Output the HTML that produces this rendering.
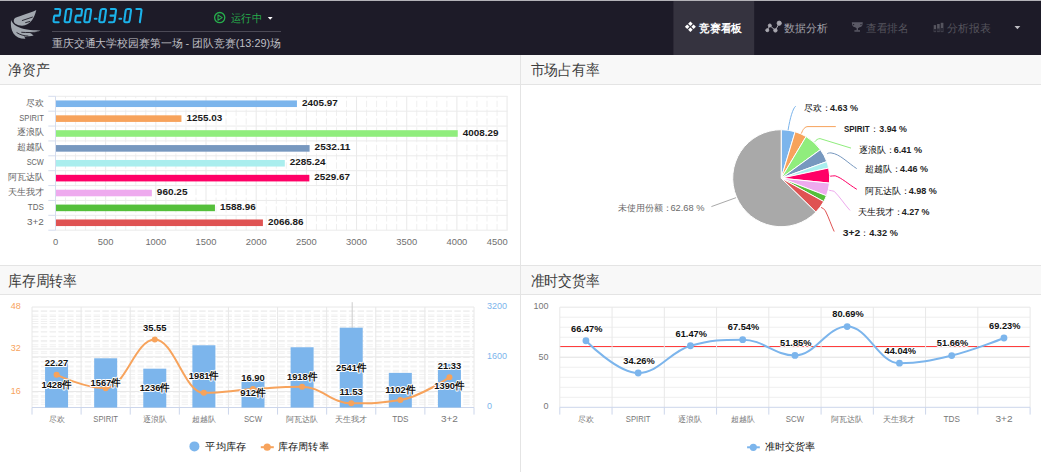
<!DOCTYPE html><html><head><meta charset="utf-8"><style>html,body{margin:0;padding:0;background:#fff;width:1041px;height:472px;overflow:hidden}svg{display:block}</style></head><body>
<svg width="1041" height="472" viewBox="0 0 1041 472">
<rect x="0" y="0" width="1041" height="55" fill="#1d1b28"/>
<rect x="0" y="0" width="1041" height="1" fill="#b4b3b8"/>
<rect x="673.4" y="1" width="80.8" height="54" fill="#35333f"/>
<g fill="#a2a8b0"><path d="M36.3,9.9 C30,13 20,15.5 15.5,17.8 C13.3,19 13.2,22.3 15.3,23.8 C18,25.6 22,26.1 25,25.3 C29,24.2 32,20.8 33.6,17.6 C34.8,15.2 35.8,12.2 36.3,9.9 Z"/><path d="M11,20 C13,25 19,28.3 27,29.6 C32,30.3 37,30.5 40.6,30.4 C37,31.8 34,32.8 30,33.3 C32,34 33,35 33.6,35.5 C30,36.3 27,36.8 24,36.6 C25,37.5 25.2,38.2 25.3,38.8 C20,38.9 16,37 13.5,33.5 C11,30 10.5,25 11,20 Z"/></g>
<g fill="none" stroke="#1d1b26" stroke-width="0.9" stroke-linecap="round"><path d="M22.3,20.5 L32.4,17.1"/><path d="M25.6,22.6 L29.8,21.5"/><path d="M16.9,32.7 C20,34.8 24,35.9 28,36.1"/><path d="M21.7,32.3 C27,32.7 33,32.6 38,32"/></g>
<g stroke="#1bb2ea" stroke-width="2.1" fill="none" stroke-linecap="round" stroke-linejoin="round">
<path d="M55.20,9.05 L58.90,9.05 Q60.50,9.05 60.27,10.65 L59.65,15.10"/>
<path d="M54.82,15.65 L59.02,15.65"/>
<path d="M54.20,16.20 L53.57,20.65 Q53.35,22.25 54.95,22.25 L58.65,22.25"/>
<path d="M65.45,15.10 L66.07,10.65 Q66.30,9.05 67.90,9.05 L70.00,9.05 Q71.60,9.05 71.37,10.65 L70.75,15.10"/>
<path d="M65.30,16.20 L64.67,20.65 Q64.45,22.25 66.05,22.25 L68.15,22.25 Q69.75,22.25 69.97,20.65 L70.60,16.20"/>
<path d="M76.90,9.05 L80.60,9.05 Q82.20,9.05 81.97,10.65 L81.35,15.10"/>
<path d="M76.52,15.65 L80.72,15.65"/>
<path d="M75.90,16.20 L75.27,20.65 Q75.05,22.25 76.65,22.25 L80.35,22.25"/>
<path d="M85.15,15.10 L85.77,10.65 Q86.00,9.05 87.60,9.05 L89.70,9.05 Q91.30,9.05 91.07,10.65 L90.45,15.10"/>
<path d="M85.00,16.20 L84.37,20.65 Q84.15,22.25 85.75,22.25 L87.85,22.25 Q89.45,22.25 89.67,20.65 L90.30,16.20"/>
<path d="M94.83,18.82 L96.53,18.82"/>
<path d="M100.05,15.10 L100.67,10.65 Q100.90,9.05 102.50,9.05 L104.60,9.05 Q106.20,9.05 105.97,10.65 L105.35,15.10"/>
<path d="M99.90,16.20 L99.27,20.65 Q99.05,22.25 100.65,22.25 L102.75,22.25 Q104.35,22.25 104.57,20.65 L105.20,16.20"/>
<path d="M110.90,9.05 L114.60,9.05 Q116.20,9.05 115.97,10.65 L115.35,15.10"/>
<path d="M110.52,15.65 L114.72,15.65"/>
<path d="M115.20,16.20 L114.57,20.65 Q114.35,22.25 112.75,22.25 L109.05,22.25"/>
<path d="M119.43,18.82 L121.13,18.82"/>
<path d="M125.05,15.10 L125.67,10.65 Q125.90,9.05 127.50,9.05 L129.60,9.05 Q131.20,9.05 130.97,10.65 L130.35,15.10"/>
<path d="M124.90,16.20 L124.27,20.65 Q124.05,22.25 125.65,22.25 L127.75,22.25 Q129.35,22.25 129.57,20.65 L130.20,16.20"/>
<path d="M136.40,9.05 L140.10,9.05 Q141.70,9.05 141.47,10.65 L140.85,15.10"/>
<path d="M140.70,16.20 L139.85,22.25"/>
</g>
<circle cx="219.7" cy="17.6" r="5.1" fill="none" stroke="#27ad4c" stroke-width="1.3"/>
<path d="M218,15 L218,20.2 L222.2,17.6 Z" fill="none" stroke="#27ad4c" stroke-width="1.1" stroke-linejoin="round"/>
<text x="231.00" y="22.30" font-size="11" fill="#27ad4c" text-anchor="start" font-weight="normal" font-family='"Liberation Sans", sans-serif' textLength="31" lengthAdjust="spacingAndGlyphs">运行中</text>
<path d="M267.8,17 L272.6,17 L270.2,19.8 Z" fill="#ffffff"/>
<rect x="52" y="31" width="229" height="1" fill="#4c4a56"/>
<text x="52.00" y="47.00" font-size="11" fill="#bfbfc4" text-anchor="start" font-weight="normal" font-family='"Liberation Sans", sans-serif' textLength="229" lengthAdjust="spacingAndGlyphs">重庆交通大学校园赛第一场 - 团队竞赛(13:29)场</text>
<g fill="#ffffff"><path d="M690.4,21.5 L692.7,23.8 L690.4,26.1 L688.1,23.8 Z"/><path d="M690.4,27.5 L692.7,29.8 L690.4,32.1 L688.1,29.8 Z"/><path d="M687.2,24.5 L689.5,26.8 L687.2,29.1 L684.9,26.8 Z"/><path d="M693.6,24.5 L695.9,26.8 L693.6,29.1 L691.3,26.8 Z"/></g>
<text x="699.20" y="32.00" font-size="11" fill="#ffffff" text-anchor="start" font-weight="bold" font-family='"Liberation Sans", sans-serif' textLength="43" lengthAdjust="spacingAndGlyphs">竞赛看板</text>
<g stroke="#a9a8b0" stroke-width="1" fill="#a9a8b0"><polyline points="767.3,30.2 769.8,25.5 775.4,30.4 779.2,23.2" fill="none"/><circle cx="767.3" cy="30.2" r="1.5"/><circle cx="769.8" cy="25.5" r="1.5"/><circle cx="775.4" cy="30.4" r="1.7"/><circle cx="779.2" cy="23.2" r="2.1"/></g>
<text x="784.00" y="32.00" font-size="11" fill="#a4a3ab" text-anchor="start" font-weight="normal" font-family='"Liberation Sans", sans-serif' textLength="43.5" lengthAdjust="spacingAndGlyphs">数据分析</text>
<g fill="#5a5965"><path d="M851.8,22.3 L862.8,22.3 L862.5,24.5 C862.2,26.5 861,27 859.5,27.2 C858.8,27.8 858,28.3 857.3,28.3 C856.6,28.3 855.8,27.8 855.1,27.2 C853.6,27 852.4,26.5 852.1,24.5 Z"/><rect x="856.6" y="28" width="1.4" height="2.5"/><rect x="854.4" y="30.2" width="5.6" height="1.5"/></g><circle cx="853.6" cy="24.6" r="0.7" fill="#1d1b26"/><circle cx="861" cy="24.6" r="0.7" fill="#1d1b26"/>
<text x="866.00" y="32.00" font-size="11" fill="#55545d" text-anchor="start" font-weight="normal" font-family='"Liberation Sans", sans-serif' textLength="42.5" lengthAdjust="spacingAndGlyphs">查看排名</text>
<g fill="#55545e"><rect x="933.7" y="25.1" width="2.4" height="7"/><rect x="937.1" y="24" width="2.6" height="8.1"/><rect x="940.7" y="22.8" width="2.7" height="9.3"/></g><g fill="#2a2936"><rect x="933.7" y="29" width="2.4" height="2.5"/><rect x="937.1" y="28.5" width="2.6" height="3"/><rect x="940.7" y="28" width="2.7" height="3.5"/></g>
<text x="947.00" y="32.00" font-size="11" fill="#55545d" text-anchor="start" font-weight="normal" font-family='"Liberation Sans", sans-serif' textLength="43.5" lengthAdjust="spacingAndGlyphs">分析报表</text>
<path d="M1014.5,26 L1020.3,26 L1017.4,29.2 Z" fill="#bdbdc2"/>
<rect x="0" y="55" width="1041" height="29" fill="#f8f8f8"/>
<rect x="0" y="84" width="1041" height="1" fill="#e4e4e4"/>
<rect x="0" y="265" width="1041" height="1" fill="#e4e4e4"/>
<rect x="0" y="266" width="1041" height="28" fill="#f8f8f8"/>
<rect x="0" y="294" width="1041" height="1" fill="#e4e4e4"/>
<rect x="520" y="55" width="1" height="417" fill="#e4e4e4"/>
<text x="8.00" y="75.00" font-size="14.5" fill="#3d3d3d" text-anchor="start" font-weight="normal" font-family='"Liberation Sans", sans-serif' textLength="41.5" lengthAdjust="spacingAndGlyphs">净资产</text>
<text x="530.50" y="75.00" font-size="14.5" fill="#3d3d3d" text-anchor="start" font-weight="normal" font-family='"Liberation Sans", sans-serif' textLength="69" lengthAdjust="spacingAndGlyphs">市场占有率</text>
<text x="8.00" y="285.50" font-size="14.5" fill="#3d3d3d" text-anchor="start" font-weight="normal" font-family='"Liberation Sans", sans-serif' textLength="69" lengthAdjust="spacingAndGlyphs">库存周转率</text>
<text x="530.50" y="285.50" font-size="14.5" fill="#3d3d3d" text-anchor="start" font-weight="normal" font-family='"Liberation Sans", sans-serif' textLength="69" lengthAdjust="spacingAndGlyphs">准时交货率</text>
<line x1="65.53" y1="230.3" x2="65.53" y2="96.3" stroke="#efefef" stroke-width="1" stroke-dasharray="6.4,2.4"/>
<line x1="75.57" y1="230.3" x2="75.57" y2="96.3" stroke="#efefef" stroke-width="1" stroke-dasharray="6.4,2.4"/>
<line x1="85.60" y1="230.3" x2="85.60" y2="96.3" stroke="#efefef" stroke-width="1" stroke-dasharray="6.4,2.4"/>
<line x1="95.64" y1="230.3" x2="95.64" y2="96.3" stroke="#efefef" stroke-width="1" stroke-dasharray="6.4,2.4"/>
<line x1="115.71" y1="230.3" x2="115.71" y2="96.3" stroke="#efefef" stroke-width="1" stroke-dasharray="6.4,2.4"/>
<line x1="125.74" y1="230.3" x2="125.74" y2="96.3" stroke="#efefef" stroke-width="1" stroke-dasharray="6.4,2.4"/>
<line x1="135.78" y1="230.3" x2="135.78" y2="96.3" stroke="#efefef" stroke-width="1" stroke-dasharray="6.4,2.4"/>
<line x1="145.81" y1="230.3" x2="145.81" y2="96.3" stroke="#efefef" stroke-width="1" stroke-dasharray="6.4,2.4"/>
<line x1="165.88" y1="230.3" x2="165.88" y2="96.3" stroke="#efefef" stroke-width="1" stroke-dasharray="6.4,2.4"/>
<line x1="175.92" y1="230.3" x2="175.92" y2="96.3" stroke="#efefef" stroke-width="1" stroke-dasharray="6.4,2.4"/>
<line x1="185.95" y1="230.3" x2="185.95" y2="96.3" stroke="#efefef" stroke-width="1" stroke-dasharray="6.4,2.4"/>
<line x1="195.99" y1="230.3" x2="195.99" y2="96.3" stroke="#efefef" stroke-width="1" stroke-dasharray="6.4,2.4"/>
<line x1="216.06" y1="230.3" x2="216.06" y2="96.3" stroke="#efefef" stroke-width="1" stroke-dasharray="6.4,2.4"/>
<line x1="226.09" y1="230.3" x2="226.09" y2="96.3" stroke="#efefef" stroke-width="1" stroke-dasharray="6.4,2.4"/>
<line x1="236.13" y1="230.3" x2="236.13" y2="96.3" stroke="#efefef" stroke-width="1" stroke-dasharray="6.4,2.4"/>
<line x1="246.16" y1="230.3" x2="246.16" y2="96.3" stroke="#efefef" stroke-width="1" stroke-dasharray="6.4,2.4"/>
<line x1="266.24" y1="230.3" x2="266.24" y2="96.3" stroke="#efefef" stroke-width="1" stroke-dasharray="6.4,2.4"/>
<line x1="276.27" y1="230.3" x2="276.27" y2="96.3" stroke="#efefef" stroke-width="1" stroke-dasharray="6.4,2.4"/>
<line x1="286.30" y1="230.3" x2="286.30" y2="96.3" stroke="#efefef" stroke-width="1" stroke-dasharray="6.4,2.4"/>
<line x1="296.34" y1="230.3" x2="296.34" y2="96.3" stroke="#efefef" stroke-width="1" stroke-dasharray="6.4,2.4"/>
<line x1="316.41" y1="230.3" x2="316.41" y2="96.3" stroke="#efefef" stroke-width="1" stroke-dasharray="6.4,2.4"/>
<line x1="326.44" y1="230.3" x2="326.44" y2="96.3" stroke="#efefef" stroke-width="1" stroke-dasharray="6.4,2.4"/>
<line x1="336.48" y1="230.3" x2="336.48" y2="96.3" stroke="#efefef" stroke-width="1" stroke-dasharray="6.4,2.4"/>
<line x1="346.51" y1="230.3" x2="346.51" y2="96.3" stroke="#efefef" stroke-width="1" stroke-dasharray="6.4,2.4"/>
<line x1="366.58" y1="230.3" x2="366.58" y2="96.3" stroke="#efefef" stroke-width="1" stroke-dasharray="6.4,2.4"/>
<line x1="376.62" y1="230.3" x2="376.62" y2="96.3" stroke="#efefef" stroke-width="1" stroke-dasharray="6.4,2.4"/>
<line x1="386.65" y1="230.3" x2="386.65" y2="96.3" stroke="#efefef" stroke-width="1" stroke-dasharray="6.4,2.4"/>
<line x1="396.69" y1="230.3" x2="396.69" y2="96.3" stroke="#efefef" stroke-width="1" stroke-dasharray="6.4,2.4"/>
<line x1="416.76" y1="230.3" x2="416.76" y2="96.3" stroke="#efefef" stroke-width="1" stroke-dasharray="6.4,2.4"/>
<line x1="426.79" y1="230.3" x2="426.79" y2="96.3" stroke="#efefef" stroke-width="1" stroke-dasharray="6.4,2.4"/>
<line x1="436.83" y1="230.3" x2="436.83" y2="96.3" stroke="#efefef" stroke-width="1" stroke-dasharray="6.4,2.4"/>
<line x1="446.86" y1="230.3" x2="446.86" y2="96.3" stroke="#efefef" stroke-width="1" stroke-dasharray="6.4,2.4"/>
<line x1="466.94" y1="230.3" x2="466.94" y2="96.3" stroke="#efefef" stroke-width="1" stroke-dasharray="6.4,2.4"/>
<line x1="476.97" y1="230.3" x2="476.97" y2="96.3" stroke="#efefef" stroke-width="1" stroke-dasharray="6.4,2.4"/>
<line x1="487.00" y1="230.3" x2="487.00" y2="96.3" stroke="#efefef" stroke-width="1" stroke-dasharray="6.4,2.4"/>
<line x1="497.04" y1="230.3" x2="497.04" y2="96.3" stroke="#efefef" stroke-width="1" stroke-dasharray="6.4,2.4"/>
<line x1="105.67" y1="96.3" x2="105.67" y2="230.3" stroke="#e9e9e9" stroke-width="1"/>
<line x1="155.85" y1="96.3" x2="155.85" y2="230.3" stroke="#e9e9e9" stroke-width="1"/>
<line x1="206.03" y1="96.3" x2="206.03" y2="230.3" stroke="#e9e9e9" stroke-width="1"/>
<line x1="256.20" y1="96.3" x2="256.20" y2="230.3" stroke="#e9e9e9" stroke-width="1"/>
<line x1="306.38" y1="96.3" x2="306.38" y2="230.3" stroke="#e9e9e9" stroke-width="1"/>
<line x1="356.55" y1="96.3" x2="356.55" y2="230.3" stroke="#e9e9e9" stroke-width="1"/>
<line x1="406.72" y1="96.3" x2="406.72" y2="230.3" stroke="#e9e9e9" stroke-width="1"/>
<line x1="456.90" y1="96.3" x2="456.90" y2="230.3" stroke="#e9e9e9" stroke-width="1"/>
<line x1="507.07" y1="96.3" x2="507.07" y2="230.3" stroke="#e9e9e9" stroke-width="1"/>
<line x1="55.5" y1="96.30" x2="507.6" y2="96.30" stroke="#ebebeb" stroke-width="1"/>
<line x1="55.5" y1="111.18" x2="507.6" y2="111.18" stroke="#ebebeb" stroke-width="1"/>
<line x1="55.5" y1="126.06" x2="507.6" y2="126.06" stroke="#ebebeb" stroke-width="1"/>
<line x1="55.5" y1="140.93" x2="507.6" y2="140.93" stroke="#ebebeb" stroke-width="1"/>
<line x1="55.5" y1="155.81" x2="507.6" y2="155.81" stroke="#ebebeb" stroke-width="1"/>
<line x1="55.5" y1="170.69" x2="507.6" y2="170.69" stroke="#ebebeb" stroke-width="1"/>
<line x1="55.5" y1="185.57" x2="507.6" y2="185.57" stroke="#ebebeb" stroke-width="1"/>
<line x1="55.5" y1="200.44" x2="507.6" y2="200.44" stroke="#ebebeb" stroke-width="1"/>
<line x1="55.5" y1="215.32" x2="507.6" y2="215.32" stroke="#ebebeb" stroke-width="1"/>
<line x1="55.5" y1="230.20" x2="507.6" y2="230.20" stroke="#ebebeb" stroke-width="1"/>
<line x1="55.5" y1="96.3" x2="55.5" y2="230.3" stroke="#d5ddee" stroke-width="1"/>
<line x1="48.3" y1="96.30" x2="55.5" y2="96.30" stroke="#d5ddee" stroke-width="1"/>
<line x1="48.3" y1="111.18" x2="55.5" y2="111.18" stroke="#d5ddee" stroke-width="1"/>
<line x1="48.3" y1="126.06" x2="55.5" y2="126.06" stroke="#d5ddee" stroke-width="1"/>
<line x1="48.3" y1="140.93" x2="55.5" y2="140.93" stroke="#d5ddee" stroke-width="1"/>
<line x1="48.3" y1="155.81" x2="55.5" y2="155.81" stroke="#d5ddee" stroke-width="1"/>
<line x1="48.3" y1="170.69" x2="55.5" y2="170.69" stroke="#d5ddee" stroke-width="1"/>
<line x1="48.3" y1="185.57" x2="55.5" y2="185.57" stroke="#d5ddee" stroke-width="1"/>
<line x1="48.3" y1="200.44" x2="55.5" y2="200.44" stroke="#d5ddee" stroke-width="1"/>
<line x1="48.3" y1="215.32" x2="55.5" y2="215.32" stroke="#d5ddee" stroke-width="1"/>
<line x1="48.3" y1="230.20" x2="55.5" y2="230.20" stroke="#d5ddee" stroke-width="1"/>
<rect x="56.0" y="100.44" width="240.94" height="6.6" fill="#7cb5ec"/>
<text x="301.94" y="105.84" font-size="9.8" fill="#1a1a1a" text-anchor="start" font-weight="bold" font-family='"Liberation Sans", sans-serif' textLength="35.7" lengthAdjust="spacingAndGlyphs">2405.97</text>
<text x="43.80" y="105.64" font-size="8.6" fill="#666666" text-anchor="end" font-weight="normal" font-family='"Liberation Sans", sans-serif'>尽欢</text>
<rect x="56.0" y="115.32" width="125.44" height="6.6" fill="#f7a35c"/>
<text x="186.44" y="120.72" font-size="9.8" fill="#1a1a1a" text-anchor="start" font-weight="bold" font-family='"Liberation Sans", sans-serif' textLength="35.7" lengthAdjust="spacingAndGlyphs">1255.03</text>
<text x="19.30" y="120.72" font-size="9.5" fill="#666666" text-anchor="start" font-weight="normal" font-family='"Liberation Sans", sans-serif' textLength="24.5" lengthAdjust="spacingAndGlyphs">SPIRIT</text>
<rect x="56.0" y="130.19" width="401.73" height="6.6" fill="#90ed7d"/>
<text x="462.73" y="135.59" font-size="9.8" fill="#1a1a1a" text-anchor="start" font-weight="bold" font-family='"Liberation Sans", sans-serif' textLength="35.7" lengthAdjust="spacingAndGlyphs">4008.29</text>
<text x="43.80" y="135.39" font-size="8.6" fill="#666666" text-anchor="end" font-weight="normal" font-family='"Liberation Sans", sans-serif'>逐浪队</text>
<rect x="56.0" y="145.07" width="253.60" height="6.6" fill="#7798bf"/>
<text x="314.60" y="150.47" font-size="9.8" fill="#1a1a1a" text-anchor="start" font-weight="bold" font-family='"Liberation Sans", sans-serif' textLength="35.7" lengthAdjust="spacingAndGlyphs">2532.11</text>
<text x="43.80" y="150.27" font-size="8.6" fill="#666666" text-anchor="end" font-weight="normal" font-family='"Liberation Sans", sans-serif'>超越队</text>
<rect x="56.0" y="159.95" width="228.82" height="6.6" fill="#aaeeee"/>
<text x="289.82" y="165.35" font-size="9.8" fill="#1a1a1a" text-anchor="start" font-weight="bold" font-family='"Liberation Sans", sans-serif' textLength="35.7" lengthAdjust="spacingAndGlyphs">2285.24</text>
<text x="26.70" y="165.35" font-size="9.5" fill="#666666" text-anchor="start" font-weight="normal" font-family='"Liberation Sans", sans-serif' textLength="17.1" lengthAdjust="spacingAndGlyphs">SCW</text>
<rect x="56.0" y="174.83" width="253.35" height="6.6" fill="#ff0066"/>
<text x="314.35" y="180.23" font-size="9.8" fill="#1a1a1a" text-anchor="start" font-weight="bold" font-family='"Liberation Sans", sans-serif' textLength="35.7" lengthAdjust="spacingAndGlyphs">2529.67</text>
<text x="43.80" y="180.03" font-size="8.6" fill="#666666" text-anchor="end" font-weight="normal" font-family='"Liberation Sans", sans-serif'>阿瓦达队</text>
<rect x="56.0" y="189.71" width="95.86" height="6.6" fill="#eeaaee"/>
<text x="156.86" y="195.11" font-size="9.8" fill="#1a1a1a" text-anchor="start" font-weight="bold" font-family='"Liberation Sans", sans-serif' textLength="30.6" lengthAdjust="spacingAndGlyphs">960.25</text>
<text x="43.80" y="194.91" font-size="8.6" fill="#666666" text-anchor="end" font-weight="normal" font-family='"Liberation Sans", sans-serif'>天生我才</text>
<rect x="56.0" y="204.58" width="158.95" height="6.6" fill="#55bf3b"/>
<text x="219.95" y="209.98" font-size="9.8" fill="#1a1a1a" text-anchor="start" font-weight="bold" font-family='"Liberation Sans", sans-serif' textLength="35.7" lengthAdjust="spacingAndGlyphs">1588.96</text>
<text x="27.80" y="209.98" font-size="9.5" fill="#666666" text-anchor="start" font-weight="normal" font-family='"Liberation Sans", sans-serif' textLength="16" lengthAdjust="spacingAndGlyphs">TDS</text>
<rect x="56.0" y="219.46" width="206.91" height="6.6" fill="#df5353"/>
<text x="267.91" y="224.86" font-size="9.8" fill="#1a1a1a" text-anchor="start" font-weight="bold" font-family='"Liberation Sans", sans-serif' textLength="35.7" lengthAdjust="spacingAndGlyphs">2066.86</text>
<text x="27.00" y="224.86" font-size="9.5" fill="#666666" text-anchor="start" font-weight="normal" font-family='"Liberation Sans", sans-serif' textLength="16.8" lengthAdjust="spacingAndGlyphs">3+2</text>
<text x="55.50" y="244.60" font-size="9.4" fill="#6f6f6f" text-anchor="middle" font-weight="normal" font-family='"Liberation Sans", sans-serif'>0</text>
<text x="105.67" y="244.60" font-size="9.4" fill="#6f6f6f" text-anchor="middle" font-weight="normal" font-family='"Liberation Sans", sans-serif'>500</text>
<text x="155.85" y="244.60" font-size="9.4" fill="#6f6f6f" text-anchor="middle" font-weight="normal" font-family='"Liberation Sans", sans-serif'>1000</text>
<text x="206.03" y="244.60" font-size="9.4" fill="#6f6f6f" text-anchor="middle" font-weight="normal" font-family='"Liberation Sans", sans-serif'>1500</text>
<text x="256.20" y="244.60" font-size="9.4" fill="#6f6f6f" text-anchor="middle" font-weight="normal" font-family='"Liberation Sans", sans-serif'>2000</text>
<text x="306.38" y="244.60" font-size="9.4" fill="#6f6f6f" text-anchor="middle" font-weight="normal" font-family='"Liberation Sans", sans-serif'>2500</text>
<text x="356.55" y="244.60" font-size="9.4" fill="#6f6f6f" text-anchor="middle" font-weight="normal" font-family='"Liberation Sans", sans-serif'>3000</text>
<text x="406.72" y="244.60" font-size="9.4" fill="#6f6f6f" text-anchor="middle" font-weight="normal" font-family='"Liberation Sans", sans-serif'>3500</text>
<text x="456.90" y="244.60" font-size="9.4" fill="#6f6f6f" text-anchor="middle" font-weight="normal" font-family='"Liberation Sans", sans-serif'>4000</text>
<text x="507.60" y="244.60" font-size="9.4" fill="#6f6f6f" text-anchor="end" font-weight="normal" font-family='"Liberation Sans", sans-serif'>4500</text>
<g stroke="#ffffff" stroke-width="1" stroke-linejoin="round">
<path d="M781.2,178.2 L781.20,129.70 A48.5,48.5 0 0 1 795.11,131.74 Z" fill="#7cb5ec"/>
<path d="M781.2,178.2 L795.11,131.74 A48.5,48.5 0 0 1 806.07,136.56 Z" fill="#f7a35c"/>
<path d="M781.2,178.2 L806.07,136.56 A48.5,48.5 0 0 1 820.40,149.64 Z" fill="#90ed7d"/>
<path d="M781.2,178.2 L820.40,149.64 A48.5,48.5 0 0 1 826.77,161.60 Z" fill="#7798bf"/>
<path d="M781.2,178.2 L826.77,161.60 A48.5,48.5 0 0 1 828.62,168.04 Z" fill="#aaeeee"/>
<path d="M781.2,178.2 L828.62,168.04 A48.5,48.5 0 0 1 829.45,183.13 Z" fill="#ff0066"/>
<path d="M781.2,178.2 L829.45,183.13 A48.5,48.5 0 0 1 826.42,195.74 Z" fill="#eeaaee"/>
<path d="M781.2,178.2 L826.42,195.74 A48.5,48.5 0 0 1 823.70,201.57 Z" fill="#55bf3b"/>
<path d="M781.2,178.2 L823.70,201.57 A48.5,48.5 0 0 1 815.88,212.10 Z" fill="#df5353"/>
<path d="M781.2,178.2 L815.88,212.10 A48.5,48.5 0 1 1 781.20,129.70 Z" fill="#a9a9a9"/>
</g>
<path d="M788.1,130 C790,118 793,108 795.7,106.2" fill="none" stroke="#7cb5ec" stroke-width="1"/>
<path d="M801.4,133.5 C803,129 805,126.6 808,126.6 L835.8,126.6" fill="none" stroke="#f7a35c" stroke-width="1"/>
<path d="M814.8,141.8 C816,140 818,138.6 820,138.6 L851,148.1" fill="none" stroke="#90ed7d" stroke-width="1"/>
<path d="M827.2,153.8 C828,153 829,152.9 831,152.9 C840,154 848,163 856.7,168.6" fill="none" stroke="#7798bf" stroke-width="1"/>
<path d="M830.2,176.2 C832,176 833.5,175.8 835.2,175.8 C842,178 848,184 856.8,189.3" fill="none" stroke="#ff0066" stroke-width="1"/>
<path d="M829.2,190.3 C831,190.5 832.5,191 834.2,191.3 C840,197 845,205 850,210.4" fill="none" stroke="#eeaaee" stroke-width="1"/>
<path d="M821.1,207.4 C822.5,208 824,209 825.2,210.4 C829,218 831.5,226 834.2,231.5" fill="none" stroke="#df5353" stroke-width="1"/>
<path d="M736,197.7 L711.4,206.6" fill="none" stroke="#a9a9a9" stroke-width="1"/>
<text x="804.00" y="110.80" font-size="8.6" fill="#111111" text-anchor="start" font-weight="normal" font-family='"Liberation Serif", serif'>尽欢：</text>
<text x="829.90" y="110.80" font-size="9.6" fill="#1e1e1e" text-anchor="start" font-weight="bold" font-family='"Liberation Sans", sans-serif' textLength="28.2" lengthAdjust="spacingAndGlyphs">4.63 %</text>
<text x="843.90" y="131.90" font-size="9.8" fill="#1e1e1e" text-anchor="start" font-weight="bold" font-family='"Liberation Sans", sans-serif' textLength="25.6" lengthAdjust="spacingAndGlyphs">SPIRIT</text>
<text x="869.50" y="131.90" font-size="9" fill="#1e1e1e" text-anchor="start" font-weight="normal" font-family='"Liberation Serif", serif'>：</text>
<text x="879.30" y="131.90" font-size="9.6" fill="#1e1e1e" text-anchor="start" font-weight="bold" font-family='"Liberation Sans", sans-serif' textLength="27.5" lengthAdjust="spacingAndGlyphs">3.94 %</text>
<text x="859.10" y="152.80" font-size="8.6" fill="#111111" text-anchor="start" font-weight="normal" font-family='"Liberation Serif", serif'>逐浪队：</text>
<text x="893.70" y="152.80" font-size="9.6" fill="#1e1e1e" text-anchor="start" font-weight="bold" font-family='"Liberation Sans", sans-serif' textLength="28.3" lengthAdjust="spacingAndGlyphs">6.41 %</text>
<text x="864.90" y="172.30" font-size="8.6" fill="#111111" text-anchor="start" font-weight="normal" font-family='"Liberation Serif", serif'>超越队：</text>
<text x="900.00" y="172.30" font-size="9.6" fill="#1e1e1e" text-anchor="start" font-weight="bold" font-family='"Liberation Sans", sans-serif' textLength="28" lengthAdjust="spacingAndGlyphs">4.46 %</text>
<text x="864.80" y="194.20" font-size="8.6" fill="#111111" text-anchor="start" font-weight="normal" font-family='"Liberation Serif", serif'>阿瓦达队：</text>
<text x="908.70" y="194.20" font-size="9.6" fill="#1e1e1e" text-anchor="start" font-weight="bold" font-family='"Liberation Sans", sans-serif' textLength="28.2" lengthAdjust="spacingAndGlyphs">4.98 %</text>
<text x="858.40" y="215.00" font-size="8.6" fill="#111111" text-anchor="start" font-weight="normal" font-family='"Liberation Serif", serif'>天生我才：</text>
<text x="901.70" y="215.00" font-size="9.6" fill="#1e1e1e" text-anchor="start" font-weight="bold" font-family='"Liberation Sans", sans-serif' textLength="27.9" lengthAdjust="spacingAndGlyphs">4.27 %</text>
<text x="842.80" y="235.60" font-size="9.8" fill="#1e1e1e" text-anchor="start" font-weight="bold" font-family='"Liberation Sans", sans-serif' textLength="17.5" lengthAdjust="spacingAndGlyphs">3+2</text>
<text x="860.30" y="235.60" font-size="9" fill="#1e1e1e" text-anchor="start" font-weight="normal" font-family='"Liberation Serif", serif'>：</text>
<text x="869.20" y="235.60" font-size="9.6" fill="#1e1e1e" text-anchor="start" font-weight="bold" font-family='"Liberation Sans", sans-serif' textLength="28.7" lengthAdjust="spacingAndGlyphs">4.32 %</text>
<text x="618.10" y="211.40" font-size="8.6" fill="#6a6a6a" text-anchor="start" font-weight="normal" font-family='"Liberation Serif", serif'>未使用份额：</text>
<text x="670.40" y="211.40" font-size="9.6" fill="#6a6a6a" text-anchor="start" font-weight="normal" font-family='"Liberation Sans", sans-serif' textLength="34.1" lengthAdjust="spacingAndGlyphs">62.68 %</text>
<line x1="32.0" y1="310.75" x2="474.0" y2="310.75" stroke="#f0f0f0" stroke-width="1" stroke-dasharray="6.4,2.4"/>
<line x1="32.0" y1="315.00" x2="474.0" y2="315.00" stroke="#f0f0f0" stroke-width="1" stroke-dasharray="6.4,2.4"/>
<line x1="32.0" y1="319.25" x2="474.0" y2="319.25" stroke="#f0f0f0" stroke-width="1" stroke-dasharray="6.4,2.4"/>
<line x1="32.0" y1="323.50" x2="474.0" y2="323.50" stroke="#f0f0f0" stroke-width="1" stroke-dasharray="6.4,2.4"/>
<line x1="32.0" y1="327.75" x2="474.0" y2="327.75" stroke="#f0f0f0" stroke-width="1" stroke-dasharray="6.4,2.4"/>
<line x1="32.0" y1="332.00" x2="474.0" y2="332.00" stroke="#f0f0f0" stroke-width="1" stroke-dasharray="6.4,2.4"/>
<line x1="32.0" y1="336.25" x2="474.0" y2="336.25" stroke="#f0f0f0" stroke-width="1" stroke-dasharray="6.4,2.4"/>
<line x1="32.0" y1="340.50" x2="474.0" y2="340.50" stroke="#f0f0f0" stroke-width="1" stroke-dasharray="6.4,2.4"/>
<line x1="32.0" y1="344.75" x2="474.0" y2="344.75" stroke="#f0f0f0" stroke-width="1" stroke-dasharray="6.4,2.4"/>
<line x1="32.0" y1="353.25" x2="474.0" y2="353.25" stroke="#f0f0f0" stroke-width="1" stroke-dasharray="6.4,2.4"/>
<line x1="32.0" y1="357.50" x2="474.0" y2="357.50" stroke="#f0f0f0" stroke-width="1" stroke-dasharray="6.4,2.4"/>
<line x1="32.0" y1="361.75" x2="474.0" y2="361.75" stroke="#f0f0f0" stroke-width="1" stroke-dasharray="6.4,2.4"/>
<line x1="32.0" y1="366.00" x2="474.0" y2="366.00" stroke="#f0f0f0" stroke-width="1" stroke-dasharray="6.4,2.4"/>
<line x1="32.0" y1="370.25" x2="474.0" y2="370.25" stroke="#f0f0f0" stroke-width="1" stroke-dasharray="6.4,2.4"/>
<line x1="32.0" y1="374.50" x2="474.0" y2="374.50" stroke="#f0f0f0" stroke-width="1" stroke-dasharray="6.4,2.4"/>
<line x1="32.0" y1="378.75" x2="474.0" y2="378.75" stroke="#f0f0f0" stroke-width="1" stroke-dasharray="6.4,2.4"/>
<line x1="32.0" y1="383.00" x2="474.0" y2="383.00" stroke="#f0f0f0" stroke-width="1" stroke-dasharray="6.4,2.4"/>
<line x1="32.0" y1="387.25" x2="474.0" y2="387.25" stroke="#f0f0f0" stroke-width="1" stroke-dasharray="6.4,2.4"/>
<line x1="32.0" y1="395.75" x2="474.0" y2="395.75" stroke="#f0f0f0" stroke-width="1" stroke-dasharray="6.4,2.4"/>
<line x1="32.0" y1="400.00" x2="474.0" y2="400.00" stroke="#f0f0f0" stroke-width="1" stroke-dasharray="6.4,2.4"/>
<line x1="32.0" y1="404.25" x2="474.0" y2="404.25" stroke="#f0f0f0" stroke-width="1" stroke-dasharray="6.4,2.4"/>
<line x1="32.0" y1="311.44" x2="474.0" y2="311.44" stroke="#f0f0f0" stroke-width="1" stroke-dasharray="6.4,2.4"/>
<line x1="32.0" y1="316.48" x2="474.0" y2="316.48" stroke="#f0f0f0" stroke-width="1" stroke-dasharray="6.4,2.4"/>
<line x1="32.0" y1="321.52" x2="474.0" y2="321.52" stroke="#f0f0f0" stroke-width="1" stroke-dasharray="6.4,2.4"/>
<line x1="32.0" y1="326.56" x2="474.0" y2="326.56" stroke="#f0f0f0" stroke-width="1" stroke-dasharray="6.4,2.4"/>
<line x1="32.0" y1="331.60" x2="474.0" y2="331.60" stroke="#f0f0f0" stroke-width="1" stroke-dasharray="6.4,2.4"/>
<line x1="32.0" y1="336.64" x2="474.0" y2="336.64" stroke="#f0f0f0" stroke-width="1" stroke-dasharray="6.4,2.4"/>
<line x1="32.0" y1="341.68" x2="474.0" y2="341.68" stroke="#f0f0f0" stroke-width="1" stroke-dasharray="6.4,2.4"/>
<line x1="32.0" y1="346.72" x2="474.0" y2="346.72" stroke="#f0f0f0" stroke-width="1" stroke-dasharray="6.4,2.4"/>
<line x1="32.0" y1="351.76" x2="474.0" y2="351.76" stroke="#f0f0f0" stroke-width="1" stroke-dasharray="6.4,2.4"/>
<line x1="32.0" y1="361.84" x2="474.0" y2="361.84" stroke="#f0f0f0" stroke-width="1" stroke-dasharray="6.4,2.4"/>
<line x1="32.0" y1="366.88" x2="474.0" y2="366.88" stroke="#f0f0f0" stroke-width="1" stroke-dasharray="6.4,2.4"/>
<line x1="32.0" y1="371.92" x2="474.0" y2="371.92" stroke="#f0f0f0" stroke-width="1" stroke-dasharray="6.4,2.4"/>
<line x1="32.0" y1="376.96" x2="474.0" y2="376.96" stroke="#f0f0f0" stroke-width="1" stroke-dasharray="6.4,2.4"/>
<line x1="32.0" y1="382.00" x2="474.0" y2="382.00" stroke="#f0f0f0" stroke-width="1" stroke-dasharray="6.4,2.4"/>
<line x1="32.0" y1="387.04" x2="474.0" y2="387.04" stroke="#f0f0f0" stroke-width="1" stroke-dasharray="6.4,2.4"/>
<line x1="32.0" y1="392.08" x2="474.0" y2="392.08" stroke="#f0f0f0" stroke-width="1" stroke-dasharray="6.4,2.4"/>
<line x1="32.0" y1="397.12" x2="474.0" y2="397.12" stroke="#f0f0f0" stroke-width="1" stroke-dasharray="6.4,2.4"/>
<line x1="32.0" y1="402.16" x2="474.0" y2="402.16" stroke="#f0f0f0" stroke-width="1" stroke-dasharray="6.4,2.4"/>
<line x1="32.0" y1="307.0" x2="474.0" y2="307.0" stroke="#e8e8e8" stroke-width="1"/>
<line x1="32.0" y1="349" x2="474.0" y2="349" stroke="#e8e8e8" stroke-width="1"/>
<line x1="32.0" y1="356.8" x2="474.0" y2="356.8" stroke="#e8e8e8" stroke-width="1"/>
<line x1="32.0" y1="391.5" x2="474.0" y2="391.5" stroke="#e8e8e8" stroke-width="1"/>
<line x1="32.00" y1="307.0" x2="32.00" y2="407.5" stroke="#e8e8e8" stroke-width="1"/>
<line x1="81.11" y1="307.0" x2="81.11" y2="407.5" stroke="#e8e8e8" stroke-width="1"/>
<line x1="130.22" y1="307.0" x2="130.22" y2="407.5" stroke="#e8e8e8" stroke-width="1"/>
<line x1="179.33" y1="307.0" x2="179.33" y2="407.5" stroke="#e8e8e8" stroke-width="1"/>
<line x1="228.44" y1="307.0" x2="228.44" y2="407.5" stroke="#e8e8e8" stroke-width="1"/>
<line x1="277.56" y1="307.0" x2="277.56" y2="407.5" stroke="#e8e8e8" stroke-width="1"/>
<line x1="326.67" y1="307.0" x2="326.67" y2="407.5" stroke="#e8e8e8" stroke-width="1"/>
<line x1="375.78" y1="307.0" x2="375.78" y2="407.5" stroke="#e8e8e8" stroke-width="1"/>
<line x1="424.89" y1="307.0" x2="424.89" y2="407.5" stroke="#e8e8e8" stroke-width="1"/>
<line x1="474.00" y1="307.0" x2="474.00" y2="407.5" stroke="#e8e8e8" stroke-width="1"/>
<line x1="32.0" y1="407.5" x2="474.0" y2="407.5" stroke="#ccd6eb" stroke-width="1"/>
<line x1="32.00" y1="407.5" x2="32.00" y2="414.6" stroke="#ccd6eb" stroke-width="1"/>
<line x1="81.11" y1="407.5" x2="81.11" y2="414.6" stroke="#ccd6eb" stroke-width="1"/>
<line x1="130.22" y1="407.5" x2="130.22" y2="414.6" stroke="#ccd6eb" stroke-width="1"/>
<line x1="179.33" y1="407.5" x2="179.33" y2="414.6" stroke="#ccd6eb" stroke-width="1"/>
<line x1="228.44" y1="407.5" x2="228.44" y2="414.6" stroke="#ccd6eb" stroke-width="1"/>
<line x1="277.56" y1="407.5" x2="277.56" y2="414.6" stroke="#ccd6eb" stroke-width="1"/>
<line x1="326.67" y1="407.5" x2="326.67" y2="414.6" stroke="#ccd6eb" stroke-width="1"/>
<line x1="375.78" y1="407.5" x2="375.78" y2="414.6" stroke="#ccd6eb" stroke-width="1"/>
<line x1="424.89" y1="407.5" x2="424.89" y2="414.6" stroke="#ccd6eb" stroke-width="1"/>
<line x1="474.00" y1="407.5" x2="474.00" y2="414.6" stroke="#ccd6eb" stroke-width="1"/>
<line x1="352.2" y1="302.2" x2="352.2" y2="407" stroke="#cccccc" stroke-width="1"/>
<rect x="45.06" y="362.65" width="23" height="44.85" fill="#7cb5ec"/>
<rect x="94.17" y="358.29" width="23" height="49.21" fill="#7cb5ec"/>
<rect x="143.28" y="368.68" width="23" height="38.82" fill="#7cb5ec"/>
<rect x="192.39" y="345.28" width="23" height="62.22" fill="#7cb5ec"/>
<rect x="241.50" y="378.86" width="23" height="28.64" fill="#7cb5ec"/>
<rect x="290.61" y="347.26" width="23" height="60.24" fill="#7cb5ec"/>
<rect x="339.72" y="327.70" width="23" height="79.80" fill="#7cb5ec"/>
<rect x="388.83" y="372.89" width="23" height="34.61" fill="#7cb5ec"/>
<rect x="437.94" y="363.85" width="23" height="43.65" fill="#7cb5ec"/>
<path d="M56.56,374.85 C56.56,374.85 86.02,388.31 105.67,388.31 C125.31,388.31 135.13,339.58 154.78,339.58 C174.42,339.58 184.24,392.83 203.89,392.83 C223.53,392.83 233.36,390.33 253.00,389.11 C272.64,387.89 282.47,386.72 302.11,386.72 C321.76,386.72 331.58,403.37 351.22,403.37 C370.87,403.37 380.69,403.37 400.33,400.11 C419.98,396.84 449.44,377.34 449.44,377.34" fill="none" stroke="#f7a35c" stroke-width="2"/>
<circle cx="56.56" cy="374.85" r="3" fill="#f7a35c"/>
<circle cx="105.67" cy="388.31" r="3" fill="#f7a35c"/>
<circle cx="154.78" cy="339.58" r="3" fill="#f7a35c"/>
<circle cx="203.89" cy="392.83" r="3" fill="#f7a35c"/>
<circle cx="253.00" cy="389.11" r="3" fill="#f7a35c"/>
<circle cx="302.11" cy="386.72" r="3" fill="#f7a35c"/>
<circle cx="351.22" cy="403.37" r="3" fill="#f7a35c"/>
<circle cx="400.33" cy="400.11" r="3" fill="#f7a35c"/>
<circle cx="449.44" cy="377.34" r="3" fill="#f7a35c"/>
<text x="56.56" y="388.08" font-size="9.8" fill="#111111" text-anchor="middle" font-weight="bold" font-family='"Liberation Sans", sans-serif' textLength="30.2" lengthAdjust="spacingAndGlyphs" stroke="#ffffff" stroke-width="2" paint-order="stroke" stroke-linejoin="round">1428件</text>
<text x="105.67" y="385.89" font-size="9.8" fill="#111111" text-anchor="middle" font-weight="bold" font-family='"Liberation Sans", sans-serif' textLength="30.2" lengthAdjust="spacingAndGlyphs" stroke="#ffffff" stroke-width="2" paint-order="stroke" stroke-linejoin="round">1567件</text>
<text x="154.78" y="391.09" font-size="9.8" fill="#111111" text-anchor="middle" font-weight="bold" font-family='"Liberation Sans", sans-serif' textLength="30.2" lengthAdjust="spacingAndGlyphs" stroke="#ffffff" stroke-width="2" paint-order="stroke" stroke-linejoin="round">1236件</text>
<text x="203.89" y="379.39" font-size="9.8" fill="#111111" text-anchor="middle" font-weight="bold" font-family='"Liberation Sans", sans-serif' textLength="30.2" lengthAdjust="spacingAndGlyphs" stroke="#ffffff" stroke-width="2" paint-order="stroke" stroke-linejoin="round">1981件</text>
<text x="253.00" y="396.18" font-size="9.8" fill="#111111" text-anchor="middle" font-weight="bold" font-family='"Liberation Sans", sans-serif' textLength="25.5" lengthAdjust="spacingAndGlyphs" stroke="#ffffff" stroke-width="2" paint-order="stroke" stroke-linejoin="round">912件</text>
<text x="302.11" y="380.38" font-size="9.8" fill="#111111" text-anchor="middle" font-weight="bold" font-family='"Liberation Sans", sans-serif' textLength="30.2" lengthAdjust="spacingAndGlyphs" stroke="#ffffff" stroke-width="2" paint-order="stroke" stroke-linejoin="round">1918件</text>
<text x="351.22" y="370.60" font-size="9.8" fill="#111111" text-anchor="middle" font-weight="bold" font-family='"Liberation Sans", sans-serif' textLength="30.2" lengthAdjust="spacingAndGlyphs" stroke="#ffffff" stroke-width="2" paint-order="stroke" stroke-linejoin="round">2541件</text>
<text x="400.33" y="393.20" font-size="9.8" fill="#111111" text-anchor="middle" font-weight="bold" font-family='"Liberation Sans", sans-serif' textLength="30.2" lengthAdjust="spacingAndGlyphs" stroke="#ffffff" stroke-width="2" paint-order="stroke" stroke-linejoin="round">1102件</text>
<text x="449.44" y="388.67" font-size="9.8" fill="#111111" text-anchor="middle" font-weight="bold" font-family='"Liberation Sans", sans-serif' textLength="30.2" lengthAdjust="spacingAndGlyphs" stroke="#ffffff" stroke-width="2" paint-order="stroke" stroke-linejoin="round">1390件</text>
<text x="56.56" y="366.25" font-size="9.8" fill="#111111" text-anchor="middle" font-weight="bold" font-family='"Liberation Sans", sans-serif' textLength="23.5" lengthAdjust="spacingAndGlyphs" stroke="#ffffff" stroke-width="2" paint-order="stroke" stroke-linejoin="round">22.27</text>
<text x="154.78" y="330.98" font-size="9.8" fill="#111111" text-anchor="middle" font-weight="bold" font-family='"Liberation Sans", sans-serif' textLength="23.5" lengthAdjust="spacingAndGlyphs" stroke="#ffffff" stroke-width="2" paint-order="stroke" stroke-linejoin="round">35.55</text>
<text x="253.00" y="380.51" font-size="9.8" fill="#111111" text-anchor="middle" font-weight="bold" font-family='"Liberation Sans", sans-serif' textLength="23.5" lengthAdjust="spacingAndGlyphs" stroke="#ffffff" stroke-width="2" paint-order="stroke" stroke-linejoin="round">16.90</text>
<text x="351.22" y="394.77" font-size="9.8" fill="#111111" text-anchor="middle" font-weight="bold" font-family='"Liberation Sans", sans-serif' textLength="23.5" lengthAdjust="spacingAndGlyphs" stroke="#ffffff" stroke-width="2" paint-order="stroke" stroke-linejoin="round">11.53</text>
<text x="449.44" y="368.74" font-size="9.8" fill="#111111" text-anchor="middle" font-weight="bold" font-family='"Liberation Sans", sans-serif' textLength="23.5" lengthAdjust="spacingAndGlyphs" stroke="#ffffff" stroke-width="2" paint-order="stroke" stroke-linejoin="round">21.33</text>
<text x="56.56" y="422.00" font-size="8.4" fill="#777777" text-anchor="middle" font-weight="normal" font-family='"Liberation Sans", sans-serif'>尽欢</text>
<text x="93.32" y="422.00" font-size="9.6" fill="#777777" text-anchor="start" font-weight="normal" font-family='"Liberation Sans", sans-serif' textLength="24.7" lengthAdjust="spacingAndGlyphs">SPIRIT</text>
<text x="154.78" y="422.00" font-size="8.4" fill="#777777" text-anchor="middle" font-weight="normal" font-family='"Liberation Sans", sans-serif'>逐浪队</text>
<text x="203.89" y="422.00" font-size="8.4" fill="#777777" text-anchor="middle" font-weight="normal" font-family='"Liberation Sans", sans-serif'>超越队</text>
<text x="243.90" y="422.00" font-size="9.6" fill="#777777" text-anchor="start" font-weight="normal" font-family='"Liberation Sans", sans-serif' textLength="18.2" lengthAdjust="spacingAndGlyphs">SCW</text>
<text x="302.11" y="422.00" font-size="8.4" fill="#777777" text-anchor="middle" font-weight="normal" font-family='"Liberation Sans", sans-serif'>阿瓦达队</text>
<text x="351.22" y="422.00" font-size="8.4" fill="#777777" text-anchor="middle" font-weight="normal" font-family='"Liberation Sans", sans-serif'>天生我才</text>
<text x="392.13" y="422.00" font-size="9.6" fill="#777777" text-anchor="start" font-weight="normal" font-family='"Liberation Sans", sans-serif' textLength="16.4" lengthAdjust="spacingAndGlyphs">TDS</text>
<text x="440.94" y="422.00" font-size="9.6" fill="#777777" text-anchor="start" font-weight="normal" font-family='"Liberation Sans", sans-serif' textLength="17" lengthAdjust="spacingAndGlyphs">3+2</text>
<text x="20.70" y="309.20" font-size="9" fill="#f7a35c" text-anchor="end" font-weight="normal" font-family='"Liberation Sans", sans-serif'>48</text>
<text x="20.70" y="351.00" font-size="9" fill="#f7a35c" text-anchor="end" font-weight="normal" font-family='"Liberation Sans", sans-serif'>32</text>
<text x="20.70" y="393.90" font-size="9" fill="#f7a35c" text-anchor="end" font-weight="normal" font-family='"Liberation Sans", sans-serif'>16</text>
<text x="487.00" y="309.20" font-size="9" fill="#7cb5ec" text-anchor="start" font-weight="normal" font-family='"Liberation Sans", sans-serif'>3200</text>
<text x="487.00" y="358.90" font-size="9" fill="#7cb5ec" text-anchor="start" font-weight="normal" font-family='"Liberation Sans", sans-serif'>1600</text>
<text x="487.00" y="409.20" font-size="9" fill="#7cb5ec" text-anchor="start" font-weight="normal" font-family='"Liberation Sans", sans-serif'>0</text>
<circle cx="194.4" cy="446.4" r="5" fill="#7cb5ec"/>
<text x="205.40" y="449.70" font-size="10.2" fill="#111111" text-anchor="start" font-weight="normal" font-family='"Liberation Serif", serif' textLength="40.7" lengthAdjust="spacingAndGlyphs">平均库存</text>
<line x1="260.8" y1="447.2" x2="273.8" y2="447.2" stroke="#f7a35c" stroke-width="2"/><circle cx="267.2" cy="447.2" r="3.6" fill="#f7a35c"/>
<text x="278.10" y="449.70" font-size="10.2" fill="#111111" text-anchor="start" font-weight="normal" font-family='"Liberation Serif", serif' textLength="50.6" lengthAdjust="spacingAndGlyphs">库存周转率</text>
<line x1="559.8" y1="397.29" x2="1030.1" y2="397.29" stroke="#efefef" stroke-width="1"/>
<line x1="559.8" y1="387.28" x2="1030.1" y2="387.28" stroke="#efefef" stroke-width="1"/>
<line x1="559.8" y1="377.27" x2="1030.1" y2="377.27" stroke="#efefef" stroke-width="1"/>
<line x1="559.8" y1="367.26" x2="1030.1" y2="367.26" stroke="#efefef" stroke-width="1"/>
<line x1="559.8" y1="357.25" x2="1030.1" y2="357.25" stroke="#efefef" stroke-width="1"/>
<line x1="559.8" y1="347.24" x2="1030.1" y2="347.24" stroke="#efefef" stroke-width="1"/>
<line x1="559.8" y1="337.23" x2="1030.1" y2="337.23" stroke="#efefef" stroke-width="1"/>
<line x1="559.8" y1="327.22" x2="1030.1" y2="327.22" stroke="#efefef" stroke-width="1"/>
<line x1="559.8" y1="317.21" x2="1030.1" y2="317.21" stroke="#efefef" stroke-width="1"/>
<line x1="559.8" y1="307.2" x2="1030.1" y2="307.2" stroke="#e6e6e6" stroke-width="1"/>
<line x1="559.8" y1="357.25" x2="1030.1" y2="357.25" stroke="#e6e6e6" stroke-width="1"/>
<line x1="559.8" y1="346.5" x2="1030.1" y2="346.5" stroke="#ff3d3d" stroke-width="1"/>
<line x1="559.80" y1="307.2" x2="559.80" y2="407.3" stroke="#e8e8e8" stroke-width="1"/>
<line x1="612.06" y1="307.2" x2="612.06" y2="407.3" stroke="#e8e8e8" stroke-width="1"/>
<line x1="664.31" y1="307.2" x2="664.31" y2="407.3" stroke="#e8e8e8" stroke-width="1"/>
<line x1="716.57" y1="307.2" x2="716.57" y2="407.3" stroke="#e8e8e8" stroke-width="1"/>
<line x1="768.82" y1="307.2" x2="768.82" y2="407.3" stroke="#e8e8e8" stroke-width="1"/>
<line x1="821.08" y1="307.2" x2="821.08" y2="407.3" stroke="#e8e8e8" stroke-width="1"/>
<line x1="873.33" y1="307.2" x2="873.33" y2="407.3" stroke="#e8e8e8" stroke-width="1"/>
<line x1="925.59" y1="307.2" x2="925.59" y2="407.3" stroke="#e8e8e8" stroke-width="1"/>
<line x1="977.84" y1="307.2" x2="977.84" y2="407.3" stroke="#e8e8e8" stroke-width="1"/>
<line x1="1030.10" y1="307.2" x2="1030.10" y2="407.3" stroke="#e8e8e8" stroke-width="1"/>
<line x1="559.8" y1="407.3" x2="1030.1" y2="407.3" stroke="#ccd6eb" stroke-width="1"/>
<line x1="559.80" y1="407.3" x2="559.80" y2="414.6" stroke="#ccd6eb" stroke-width="1"/>
<line x1="612.06" y1="407.3" x2="612.06" y2="414.6" stroke="#ccd6eb" stroke-width="1"/>
<line x1="664.31" y1="407.3" x2="664.31" y2="414.6" stroke="#ccd6eb" stroke-width="1"/>
<line x1="716.57" y1="407.3" x2="716.57" y2="414.6" stroke="#ccd6eb" stroke-width="1"/>
<line x1="768.82" y1="407.3" x2="768.82" y2="414.6" stroke="#ccd6eb" stroke-width="1"/>
<line x1="821.08" y1="407.3" x2="821.08" y2="414.6" stroke="#ccd6eb" stroke-width="1"/>
<line x1="873.33" y1="407.3" x2="873.33" y2="414.6" stroke="#ccd6eb" stroke-width="1"/>
<line x1="925.59" y1="407.3" x2="925.59" y2="414.6" stroke="#ccd6eb" stroke-width="1"/>
<line x1="977.84" y1="407.3" x2="977.84" y2="414.6" stroke="#ccd6eb" stroke-width="1"/>
<line x1="1030.10" y1="407.3" x2="1030.10" y2="414.6" stroke="#ccd6eb" stroke-width="1"/>
<path d="M585.93,340.76 C585.93,340.76 617.28,373.01 638.18,373.01 C659.09,373.01 669.54,351.84 690.44,345.77 C711.34,339.69 721.79,339.69 742.69,339.69 C763.60,339.69 774.05,355.40 794.95,355.40 C815.85,355.40 826.30,326.53 847.21,326.53 C868.11,326.53 878.56,363.22 899.46,363.22 C920.36,363.22 930.81,360.63 951.72,355.59 C972.62,350.55 1003.97,338.00 1003.97,338.00" fill="none" stroke="#7cb5ec" stroke-width="2"/>
<circle cx="585.93" cy="340.76" r="3.4" fill="#7cb5ec"/>
<circle cx="638.18" cy="373.01" r="3.4" fill="#7cb5ec"/>
<circle cx="690.44" cy="345.77" r="3.4" fill="#7cb5ec"/>
<circle cx="742.69" cy="339.69" r="3.4" fill="#7cb5ec"/>
<circle cx="794.95" cy="355.40" r="3.4" fill="#7cb5ec"/>
<circle cx="847.21" cy="326.53" r="3.4" fill="#7cb5ec"/>
<circle cx="899.46" cy="363.22" r="3.4" fill="#7cb5ec"/>
<circle cx="951.72" cy="355.59" r="3.4" fill="#7cb5ec"/>
<circle cx="1003.97" cy="338.00" r="3.4" fill="#7cb5ec"/>
<text x="586.73" y="331.56" font-size="9.8" fill="#111111" text-anchor="middle" font-weight="bold" font-family='"Liberation Sans", sans-serif' textLength="31.4" lengthAdjust="spacingAndGlyphs" stroke="#ffffff" stroke-width="2" paint-order="stroke" stroke-linejoin="round">66.47%</text>
<text x="638.98" y="363.81" font-size="9.8" fill="#111111" text-anchor="middle" font-weight="bold" font-family='"Liberation Sans", sans-serif' textLength="31.4" lengthAdjust="spacingAndGlyphs" stroke="#ffffff" stroke-width="2" paint-order="stroke" stroke-linejoin="round">34.26%</text>
<text x="691.24" y="336.57" font-size="9.8" fill="#111111" text-anchor="middle" font-weight="bold" font-family='"Liberation Sans", sans-serif' textLength="31.4" lengthAdjust="spacingAndGlyphs" stroke="#ffffff" stroke-width="2" paint-order="stroke" stroke-linejoin="round">61.47%</text>
<text x="743.49" y="330.49" font-size="9.8" fill="#111111" text-anchor="middle" font-weight="bold" font-family='"Liberation Sans", sans-serif' textLength="31.4" lengthAdjust="spacingAndGlyphs" stroke="#ffffff" stroke-width="2" paint-order="stroke" stroke-linejoin="round">67.54%</text>
<text x="795.75" y="346.20" font-size="9.8" fill="#111111" text-anchor="middle" font-weight="bold" font-family='"Liberation Sans", sans-serif' textLength="31.4" lengthAdjust="spacingAndGlyphs" stroke="#ffffff" stroke-width="2" paint-order="stroke" stroke-linejoin="round">51.85%</text>
<text x="848.01" y="317.33" font-size="9.8" fill="#111111" text-anchor="middle" font-weight="bold" font-family='"Liberation Sans", sans-serif' textLength="31.4" lengthAdjust="spacingAndGlyphs" stroke="#ffffff" stroke-width="2" paint-order="stroke" stroke-linejoin="round">80.69%</text>
<text x="900.26" y="354.02" font-size="9.8" fill="#111111" text-anchor="middle" font-weight="bold" font-family='"Liberation Sans", sans-serif' textLength="31.4" lengthAdjust="spacingAndGlyphs" stroke="#ffffff" stroke-width="2" paint-order="stroke" stroke-linejoin="round">44.04%</text>
<text x="952.52" y="346.39" font-size="9.8" fill="#111111" text-anchor="middle" font-weight="bold" font-family='"Liberation Sans", sans-serif' textLength="31.4" lengthAdjust="spacingAndGlyphs" stroke="#ffffff" stroke-width="2" paint-order="stroke" stroke-linejoin="round">51.66%</text>
<text x="1004.77" y="328.80" font-size="9.8" fill="#111111" text-anchor="middle" font-weight="bold" font-family='"Liberation Sans", sans-serif' textLength="31.4" lengthAdjust="spacingAndGlyphs" stroke="#ffffff" stroke-width="2" paint-order="stroke" stroke-linejoin="round">69.23%</text>
<text x="585.93" y="422.00" font-size="8.4" fill="#777777" text-anchor="middle" font-weight="normal" font-family='"Liberation Sans", sans-serif'>尽欢</text>
<text x="625.83" y="422.00" font-size="9.6" fill="#777777" text-anchor="start" font-weight="normal" font-family='"Liberation Sans", sans-serif' textLength="24.7" lengthAdjust="spacingAndGlyphs">SPIRIT</text>
<text x="690.44" y="422.00" font-size="8.4" fill="#777777" text-anchor="middle" font-weight="normal" font-family='"Liberation Sans", sans-serif'>逐浪队</text>
<text x="742.69" y="422.00" font-size="8.4" fill="#777777" text-anchor="middle" font-weight="normal" font-family='"Liberation Sans", sans-serif'>超越队</text>
<text x="785.85" y="422.00" font-size="9.6" fill="#777777" text-anchor="start" font-weight="normal" font-family='"Liberation Sans", sans-serif' textLength="18.2" lengthAdjust="spacingAndGlyphs">SCW</text>
<text x="847.21" y="422.00" font-size="8.4" fill="#777777" text-anchor="middle" font-weight="normal" font-family='"Liberation Sans", sans-serif'>阿瓦达队</text>
<text x="899.46" y="422.00" font-size="8.4" fill="#777777" text-anchor="middle" font-weight="normal" font-family='"Liberation Sans", sans-serif'>天生我才</text>
<text x="943.52" y="422.00" font-size="9.6" fill="#777777" text-anchor="start" font-weight="normal" font-family='"Liberation Sans", sans-serif' textLength="16.4" lengthAdjust="spacingAndGlyphs">TDS</text>
<text x="995.47" y="422.00" font-size="9.6" fill="#777777" text-anchor="start" font-weight="normal" font-family='"Liberation Sans", sans-serif' textLength="17" lengthAdjust="spacingAndGlyphs">3+2</text>
<text x="548.60" y="309.20" font-size="9" fill="#777777" text-anchor="end" font-weight="normal" font-family='"Liberation Sans", sans-serif'>100</text>
<text x="548.60" y="359.80" font-size="9" fill="#777777" text-anchor="end" font-weight="normal" font-family='"Liberation Sans", sans-serif'>50</text>
<text x="548.60" y="409.30" font-size="9" fill="#777777" text-anchor="end" font-weight="normal" font-family='"Liberation Sans", sans-serif'>0</text>
<line x1="747.1" y1="447.3" x2="759.8" y2="447.3" stroke="#7cb5ec" stroke-width="2"/><circle cx="753.3" cy="447.3" r="3.6" fill="#7cb5ec"/>
<text x="764.60" y="449.70" font-size="10.2" fill="#111111" text-anchor="start" font-weight="normal" font-family='"Liberation Serif", serif' textLength="50.4" lengthAdjust="spacingAndGlyphs">准时交货率</text>
</svg></body></html>
